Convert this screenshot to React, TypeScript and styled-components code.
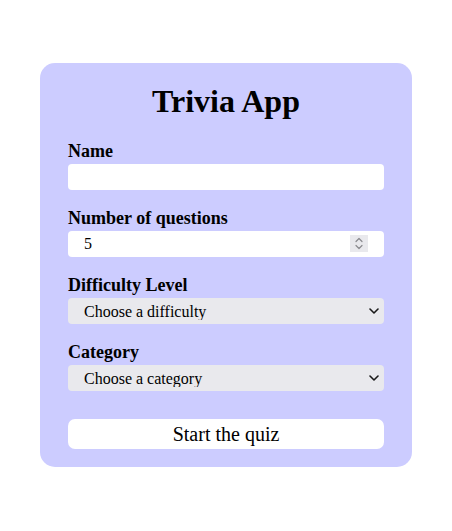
import React from "react";
import styled, { createGlobalStyle } from "styled-components";

const GlobalStyle = createGlobalStyle`
  html, body {
    margin: 0;
    padding: 0;
    background: #ffffff;
    font-family: "Liberation Serif", "Times New Roman", serif;
    color: #000000;
  }
`;

const chevron =
  "data:image/svg+xml;utf8," +
  encodeURIComponent(
    '<svg xmlns="http://www.w3.org/2000/svg" width="10" height="6" viewBox="0 0 10 6"><path d="M1 1 L5 5 L9 1" fill="none" stroke="#1a1a1a" stroke-width="1.6" stroke-linecap="round" stroke-linejoin="round"/></svg>'
  );

const Page = styled.div`
  display: flex;
  justify-content: center;
  padding-top: 63px;
`;

const Card = styled.form`
  width: 372px;
  box-sizing: border-box;
  background: #ccccff;
  border-radius: 15px;
  padding: 20px 28px 18px;
  display: flex;
  flex-direction: column;
`;

const Title = styled.h1`
  margin: 0 0 21px;
  font-size: 32px;
  line-height: 37px;
  font-weight: bold;
  text-align: center;
`;

const Field = styled.div<{ $last?: boolean }>`
  display: flex;
  flex-direction: column;
  margin-bottom: ${(p) => (p.$last ? "28px" : "18px")};
`;

const Label = styled.label`
  display: block;
  font-size: 18px;
  line-height: 21px;
  font-weight: bold;
  margin-bottom: 2px;
`;

const InputWrap = styled.div`
  position: relative;
  display: flex;
`;

const TextInput = styled.input`
  box-sizing: border-box;
  width: 100%;
  height: 26px;
  border: none;
  border-radius: 4px;
  background: #ffffff;
  padding: 0 16px;
  font-family: "Liberation Serif", "Times New Roman", serif;
  font-size: 16px;
  color: #000000;
  outline: none;
  -moz-appearance: textfield;

  &::-webkit-inner-spin-button,
  &::-webkit-outer-spin-button {
    -webkit-appearance: none;
    margin: 0;
  }
`;

const Spinner = styled.div`
  position: absolute;
  right: 16px;
  top: 4px;
  width: 18px;
  height: 17px;
  background: #e9e9ed;
  display: flex;
  align-items: center;
  justify-content: center;
  pointer-events: none;
`;

const Select = styled.select`
  box-sizing: border-box;
  width: 100%;
  height: 26px;
  border: none;
  border-radius: 4px;
  appearance: none;
  -webkit-appearance: none;
  background-color: #e9e9ed;
  background-image: url("${chevron}");
  background-repeat: no-repeat;
  background-position: right 5px center;
  background-size: 10px 6px;
  padding: 0 20px 0 16px;
  font-family: "Liberation Serif", "Times New Roman", serif;
  font-size: 16px;
  color: #000000;
  outline: none;
`;

const StartButton = styled.button`
  box-sizing: border-box;
  width: 100%;
  height: 30px;
  border: none;
  border-radius: 7px;
  background: #ffffff;
  font-family: "Liberation Serif", "Times New Roman", serif;
  font-size: 20px;
  color: #000000;
  cursor: pointer;
  padding: 0;
`;

function SpinIcon() {
  return (
    <svg width="10" height="13" viewBox="0 0 10 13" aria-hidden="true">
      <path
        d="M2 4.5 L5 1.5 L8 4.5 M2 8.5 L5 11.5 L8 8.5"
        fill="none"
        stroke="#8a8a8e"
        strokeWidth="1.2"
        strokeLinecap="round"
        strokeLinejoin="round"
      />
    </svg>
  );
}

export default function App() {
  return (
    <>
      <GlobalStyle />
      <Page>
        <Card onSubmit={(e) => e.preventDefault()}>
          <Title>Trivia App</Title>
          <Field>
            <Label htmlFor="name">Name</Label>
            <TextInput id="name" type="text" />
          </Field>
          <Field>
            <Label htmlFor="count">Number of questions</Label>
            <InputWrap>
              <TextInput id="count" type="number" defaultValue={5} />
              <Spinner>
                <SpinIcon />
              </Spinner>
            </InputWrap>
          </Field>
          <Field>
            <Label htmlFor="difficulty">Difficulty Level</Label>
            <Select id="difficulty" defaultValue="">
              <option value="">Choose a difficulty</option>
              <option value="easy">Easy</option>
              <option value="medium">Medium</option>
              <option value="hard">Hard</option>
            </Select>
          </Field>
          <Field $last>
            <Label htmlFor="category">Category</Label>
            <Select id="category" defaultValue="">
              <option value="">Choose a category</option>
              <option value="general">General Knowledge</option>
            </Select>
          </Field>
          <StartButton type="submit">Start the quiz</StartButton>
        </Card>
      </Page>
    </>
  );
}
